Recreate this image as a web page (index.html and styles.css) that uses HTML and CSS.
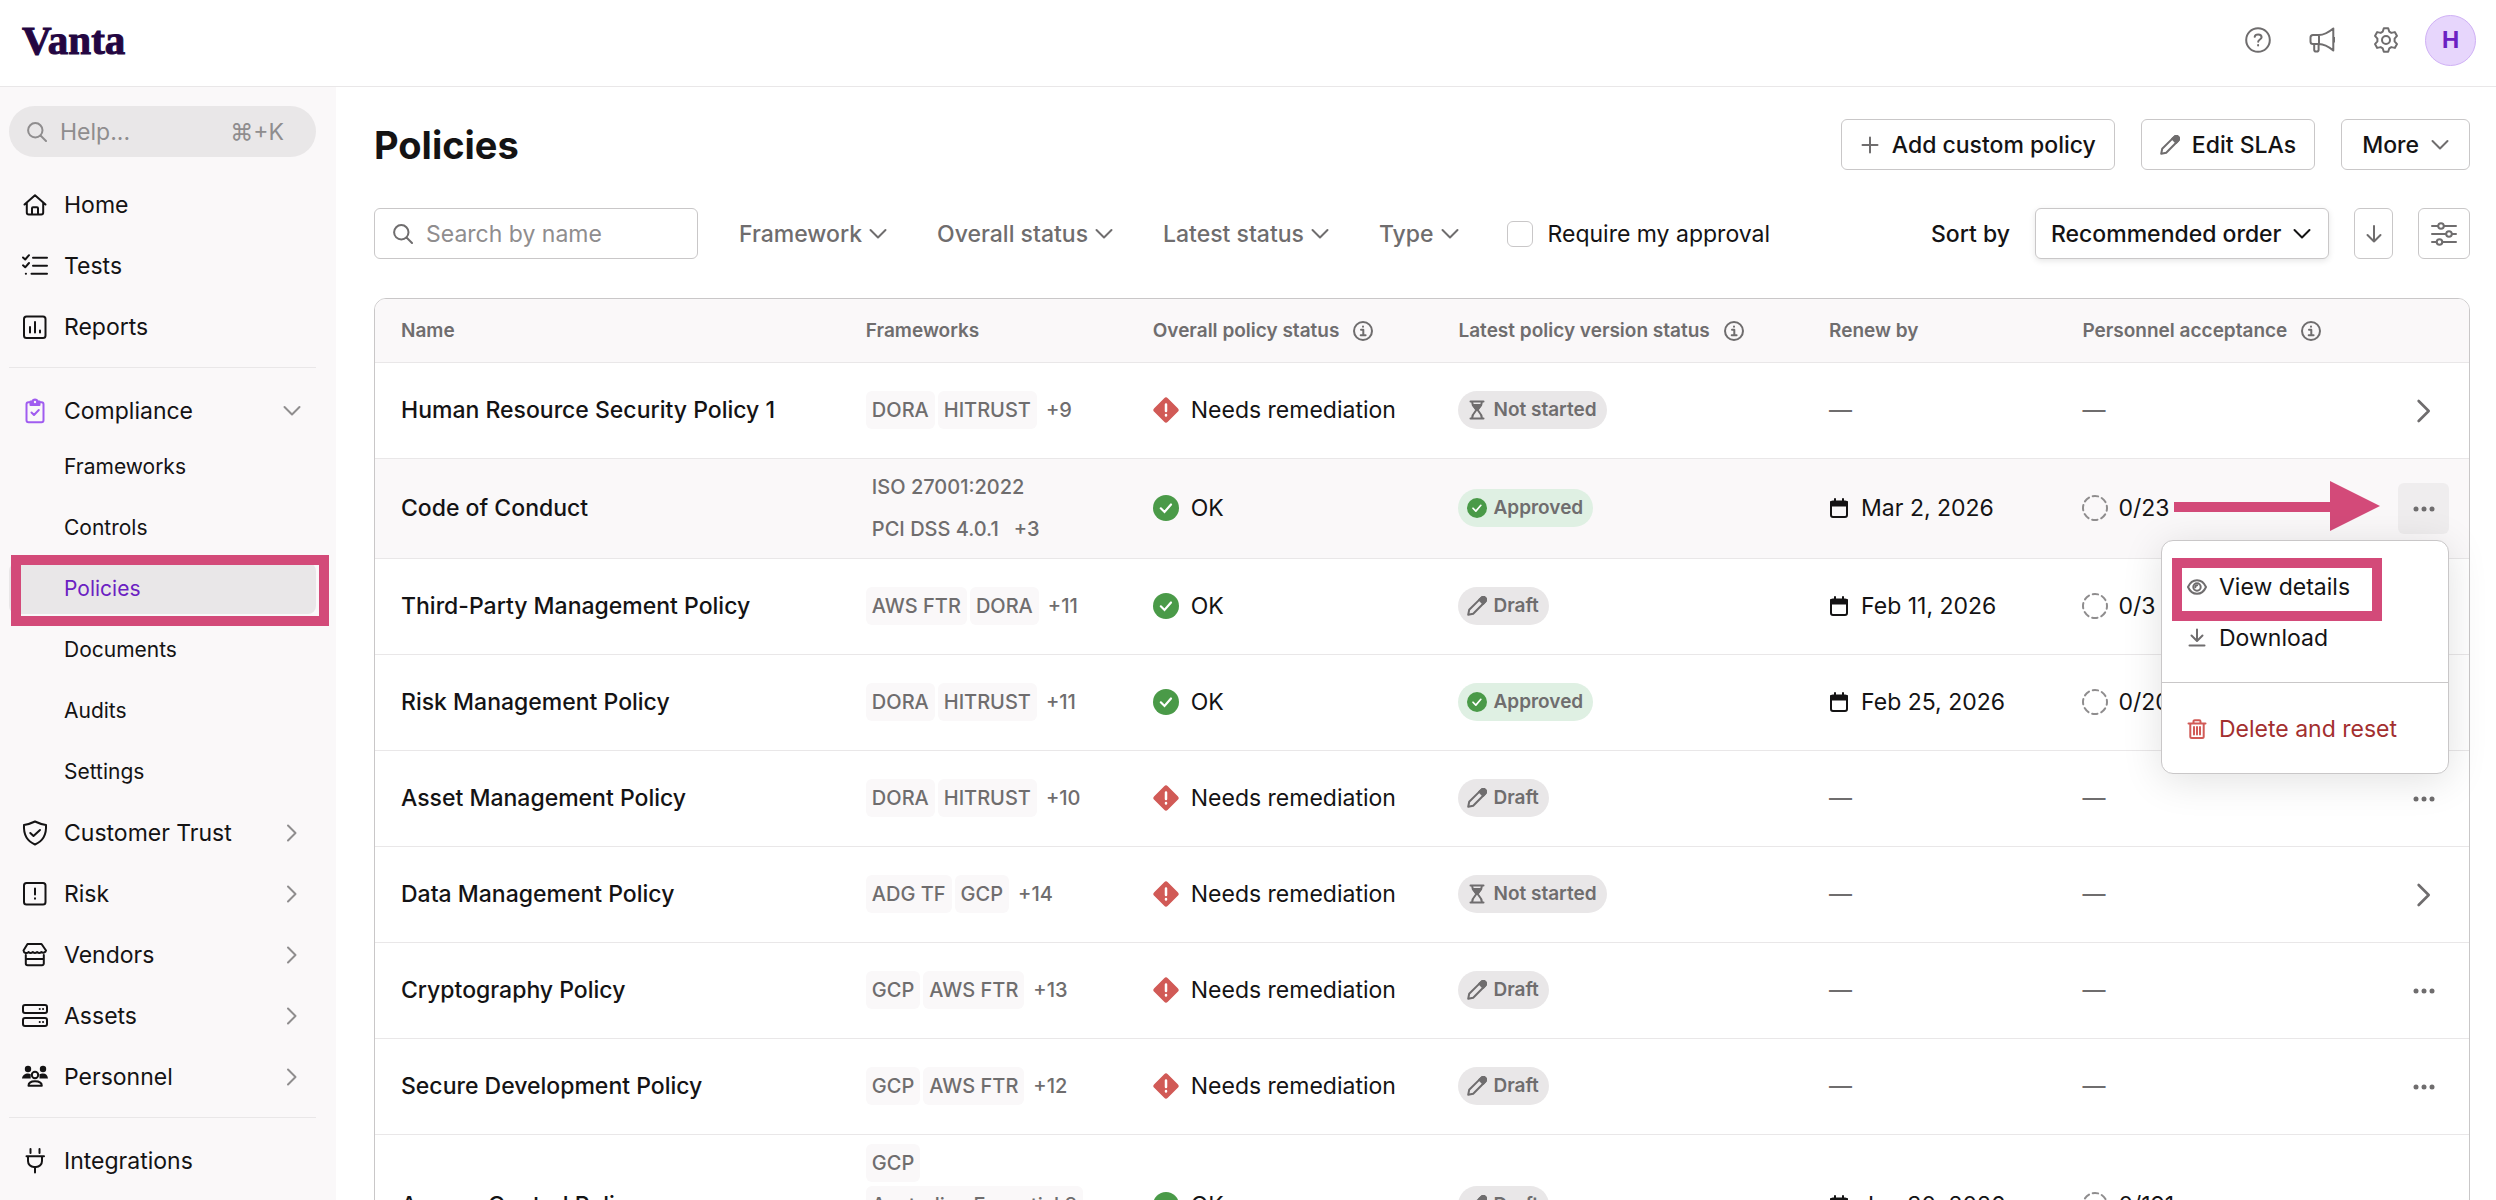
FILE: index.html
```html
<!DOCTYPE html>
<html lang="en">
<head>
    <meta charset="UTF-8">
    <meta name="viewport" content="width=device-width, initial-scale=1.0">
    <title>Policies | Vanta</title>
    <link rel="stylesheet" href="styles.css">
</head>
<body>
    <!-- Icon set -->
    <svg class="icon-defs" aria-hidden="true">
        <symbol id="i-search" viewBox="0 0 20 20"><circle cx="8.3" cy="8.3" r="7.2"/><path d="M13.5 13.5L19 19"/></symbol>
        <symbol id="i-down" viewBox="0 0 18 18"><path d="M1.5 5L9 12.5L16.5 5"/></symbol>
        <symbol id="i-right" viewBox="0 0 18 18"><path d="M5 1.5L12.5 9L5 16.5"/></symbol>
        <symbol id="i-home" viewBox="0 0 26 26"><path d="M2.5 12.5L13 3.2L23.5 12.5M4.8 11V20.5a2 2 0 0 0 2 2H19.2a2 2 0 0 0 2-2V11M10 22.3V16.2a1 1 0 0 1 1-1h4a1 1 0 0 1 1 1V22.3"/></symbol>
        <symbol id="i-tests" viewBox="0 0 26 26"><path d="M1 4.5L3.2 6.5L7 2.2M1 12.3L3.2 14.3L7 10M11 4.8H25M11 12.8H25M9.5 20.8H25M3.8 20.8H4"/></symbol>
        <symbol id="i-reports" viewBox="0 0 26 26"><rect x="2" y="2.5" width="21.5" height="21.5" rx="2.5"/><path d="M8 13V18.5M13 8V18.5M18 16.5V18.5"/></symbol>
        <symbol id="i-compliance" viewBox="0 0 26 26"><rect x="4.5" y="4.2" width="17" height="20" rx="2"/><path d="M9.5 14.5L12 17L16.8 12"/><path d="M8.5 3.5H10.3a2.8 2.8 0 0 1 5.4 0H17.5V7H8.5Z" fill="currentColor"/><circle cx="13" cy="4" r="1.2" fill="#faf8f9" stroke="none"/></symbol>
        <symbol id="i-shield" viewBox="0 0 26 26"><path d="M13 1.5C16 3 20 4.3 24 4.9C24.5 13 22.5 20.5 13 24.5C3.5 20.5 1.5 13 2 4.9C6 4.3 10 3 13 1.5ZM8.3 13L11.5 16L18 10"/></symbol>
        <symbol id="i-risk" viewBox="0 0 26 26"><rect x="2" y="2" width="21.5" height="21.5" rx="2.5"/><path d="M13 7.5V13.5M13 17.3V17.7"/></symbol>
        <symbol id="i-vendors" viewBox="0 0 26 26"><path d="M5.5 2H19.5L24 8.5a2.8 2.8 0 0 1-4.6 1.5a3.3 3.3 0 0 1-4.3 0a3.3 3.3 0 0 1-4.3 0a3.3 3.3 0 0 1-4.3 0A2.8 2.8 0 0 1 1.5 8.5ZM3.8 13V21.5a1.8 1.8 0 0 0 1.8 1.8H20a1.8 1.8 0 0 0 1.8-1.8V13M4 17H21.5"/></symbol>
        <symbol id="i-assets" viewBox="0 0 26 26"><rect x="1" y="2" width="24" height="8" rx="2"/><rect x="1" y="15" width="24" height="8" rx="2"/><path d="M17.7 6h.1M21 6h.1M17.7 19h.1M21 19h.1"/></symbol>
        <symbol id="i-people" viewBox="0 0 26 26"><g fill="currentColor" stroke="none"><circle cx="6" cy="5" r="3.2"/><circle cx="21" cy="5" r="3.2"/><path d="M0 14.5C.5 11 3 9.5 6 9.5C7 9.5 8 9.7 8.7 10.2V14.5ZM26 14.5C25.5 11 24 9.5 21 9.5C19.5 9.5 18.5 9.7 17.5 10.2V14.5Z"/></g><circle cx="13" cy="11" r="3.2"/><path d="M6.5 21.7C6.5 18.5 9 17.2 13 17.2S19.8 18.5 19.8 21.7Z"/></symbol>
        <symbol id="i-plug" viewBox="0 0 26 26"><path d="M8.5 1V5M17.5 1V5M4.5 8.2H22M6 8.5V13a6 6 0 0 0 6 6h2a6 6 0 0 0 6-6V8.5M13 19.5V24.5"/></symbol>
        <symbol id="i-help" viewBox="0 0 26 26"><circle cx="13" cy="13" r="11.8"/><path d="M9.7 9.8C10 8 11.5 7.5 13.2 7.5C15 7.5 16.6 8.5 16.6 10.3C16.6 12.5 13.2 12.5 13.2 14.8M13.1 18.1V18.4"/></symbol>
        <symbol id="i-megaphone" viewBox="0 0 26 26"><path d="M10 8C15.5 8 20 5 24.3 1.5V23.5C20 20 15.5 17 10 17ZM10 8H4a2.5 2.5 0 0 0-2.5 2.5v4A2.5 2.5 0 0 0 4 17H10M5.2 17V22.8a1.8 1.8 0 0 0 1.8 1.8h.8a1.8 1.8 0 0 0 1.8-1.8V17M25.5 11V14.5"/></symbol>
        <symbol id="i-gear" viewBox="0 0 26 26"><circle cx="13" cy="13" r="4"/><path d="M10.8 1.3H15.2L16.3 4.7L18.3 5.9L21.8 5.1L24 8.9L21.6 11.6V14.4L24 17.1L21.8 20.9L18.3 20.1L16.3 21.3L15.2 24.7H10.8L9.7 21.3L7.7 20.1L4.2 20.9L2 17.1L4.4 14.4V11.6L2 8.9L4.2 5.1L7.7 5.9L9.7 4.7Z"/></symbol>
        <symbol id="i-plus" viewBox="0 0 20 20"><path d="M10 2.5V17.5M2.5 10H17.5"/></symbol>
        <symbol id="i-pencil" viewBox="0 0 20 20"><path d="M1.2 18.8L2.2 13.8L14.2 1.9a2.2 2.2 0 0 1 3.9 3.8L6.2 17.8Z"/><path d="M12.3 3.8L14.5 1.7A2.3 2.3 0 0 1 18.3 5.5L16.2 7.7Z" fill="currentColor"/></symbol>
        <symbol id="i-arrow-down" viewBox="0 0 18 18"><path d="M9 1V16.5M2.5 10L9 16.5L15.5 10"/></symbol>
        <symbol id="i-sliders" viewBox="0 0 26 26"><path d="M1 5H7M13 5H25M1 13H15M21 13H25M1 21H5.5M11.5 21H25"/><circle cx="10" cy="5" r="2.8"/><circle cx="18" cy="13" r="2.8"/><circle cx="8.5" cy="21" r="2.8"/></symbol>
        <symbol id="i-info" viewBox="0 0 20 20"><circle cx="10" cy="10" r="9"/><path d="M8 8.8H10.3V14M7.7 14.2H12.6M10 5.5V5.7"/></symbol>
        <symbol id="i-alert" viewBox="0 0 26 26"><path d="M11.2 1.2a2.5 2.5 0 0 1 3.6 0l10 10a2.5 2.5 0 0 1 0 3.6l-10 10a2.5 2.5 0 0 1-3.6 0l-10-10a2.5 2.5 0 0 1 0-3.6Z" fill="#d15a56"/><path d="M13 7.5V14M13 18V18.4" stroke="#fff" stroke-width="2.5" stroke-linecap="round"/></symbol>
        <symbol id="i-ok" viewBox="0 0 26 26"><circle cx="13" cy="13" r="13" fill="#4a9a48"/><path d="M7.8 13.3L11.5 17L18 9.5" stroke="#fff" stroke-width="2.2" stroke-linecap="round" fill="none"/></symbol>
        <symbol id="i-hourglass" viewBox="0 0 20 20"><path d="M3.5 1.5H16.5M3.5 18.5H16.5M5 1.5C5 6 8 8 9.5 10C8 12 5 14 5 18.5M15 1.5C15 6 12 8 10.5 10C12 12 15 14 15 18.5"/><path d="M5.8 5H14.2L10 10Z" fill="currentColor"/></symbol>
        <symbol id="i-calendar" viewBox="0 0 20 20"><rect x="2" y="3.5" width="16" height="15.5" rx="2"/><path d="M2 4H18V7.5H2Z" fill="currentColor"/><path d="M6 1V4M14 1V4"/></symbol>
        <symbol id="i-dashed" viewBox="0 0 26 26"><circle cx="13" cy="13" r="12" stroke-dasharray="5.5 3.924" stroke-dashoffset="2.7"/></symbol>
        <symbol id="i-dots" viewBox="0 0 26 26"><g fill="currentColor" stroke="none"><circle cx="5" cy="13" r="2.5"/><circle cx="13" cy="13" r="2.5"/><circle cx="21" cy="13" r="2.5"/></g></symbol>
        <symbol id="i-eye" viewBox="0 0 20 20"><path d="M1 10C3 5.5 6 3.2 10 3.2S17 5.5 19 10C17 14.5 14 16.8 10 16.8S3 14.5 1 10Z"/><circle cx="10" cy="10" r="3.7"/><path d="M8.3 10.3C8.3 9 9 8.3 10.2 8.3"/></symbol>
        <symbol id="i-download" viewBox="0 0 20 20"><path d="M10 1.5V12.5M4.5 7.5L10 13L15.5 7.5M2.5 17.5H17.5"/></symbol>
        <symbol id="i-trash" viewBox="0 0 20 20"><path d="M1.5 4.5H18.5M6.5 4.5V2.5a1.3 1.3 0 0 1 1.3-1.3h4.4a1.3 1.3 0 0 1 1.3 1.3V4.5M3.3 4.5V17.5a1.5 1.5 0 0 0 1.5 1.5H15.2a1.5 1.5 0 0 0 1.5-1.5V4.5M7 8V15.5M10 8V15.5M13 8V15.5"/></symbol>
    </svg>

    <!-- Top bar -->
    <header class="topbar">
        <a class="logo" href="#">Vanta</a>
        <div class="topbar-actions">
            <button class="icon-btn" aria-label="Help"><svg class="icon icon-lg"><use href="#i-help"/></svg></button>
            <button class="icon-btn" aria-label="Announcements"><svg class="icon icon-lg"><use href="#i-megaphone"/></svg></button>
            <button class="icon-btn" aria-label="Settings"><svg class="icon icon-lg"><use href="#i-gear"/></svg></button>
            <button class="avatar">H</button>
        </div>
    </header>

    <div class="layout">
        <!-- Sidebar -->
        <nav class="sidebar">
            <label class="help-search">
                <svg class="icon"><use href="#i-search"/></svg>
                <input type="text" placeholder="Help..." aria-label="Help">
                <kbd>⌘+K</kbd>
            </label>

            <a class="nav-item" href="#"><svg class="icon icon-lg"><use href="#i-home"/></svg><span>Home</span></a>
            <a class="nav-item" href="#"><svg class="icon icon-lg"><use href="#i-tests"/></svg><span>Tests</span></a>
            <a class="nav-item" href="#"><svg class="icon icon-lg"><use href="#i-reports"/></svg><span>Reports</span></a>
            <hr>
            <a class="nav-item open" href="#"><svg class="icon icon-lg"><use href="#i-compliance"/></svg><span>Compliance</span><svg class="icon chevron"><use href="#i-down"/></svg></a>
            <div class="subnav">
                <a class="sub-item" href="#">Frameworks</a>
                <a class="sub-item" href="#">Controls</a>
                <a class="sub-item active" href="#">Policies<i class="mark mark-nav"></i></a>
                <a class="sub-item" href="#">Documents</a>
                <a class="sub-item" href="#">Audits</a>
                <a class="sub-item" href="#">Settings</a>
            </div>
            <a class="nav-item" href="#"><svg class="icon icon-lg"><use href="#i-shield"/></svg><span>Customer Trust</span><svg class="icon chevron"><use href="#i-right"/></svg></a>
            <a class="nav-item" href="#"><svg class="icon icon-lg"><use href="#i-risk"/></svg><span>Risk</span><svg class="icon chevron"><use href="#i-right"/></svg></a>
            <a class="nav-item" href="#"><svg class="icon icon-lg"><use href="#i-vendors"/></svg><span>Vendors</span><svg class="icon chevron"><use href="#i-right"/></svg></a>
            <a class="nav-item" href="#"><svg class="icon icon-lg"><use href="#i-assets"/></svg><span>Assets</span><svg class="icon chevron"><use href="#i-right"/></svg></a>
            <a class="nav-item" href="#"><svg class="icon icon-lg"><use href="#i-people"/></svg><span>Personnel</span><svg class="icon chevron"><use href="#i-right"/></svg></a>
            <hr>
            <a class="nav-item" href="#"><svg class="icon icon-lg"><use href="#i-plug"/></svg><span>Integrations</span></a>
        </nav>

        <main class="main">
            <div class="page-head">
                <h1>Policies</h1>
                <div class="page-actions">
                    <button class="btn"><svg class="icon"><use href="#i-plus"/></svg>Add custom policy</button>
                    <button class="btn"><svg class="icon"><use href="#i-pencil"/></svg>Edit SLAs</button>
                    <button class="btn btn-more">More<svg class="icon chevron"><use href="#i-down"/></svg></button>
                </div>
            </div>

            <!-- Filters -->
            <div class="filters">
                <label class="search-box">
                    <svg class="icon"><use href="#i-search"/></svg>
                    <input type="text" placeholder="Search by name" aria-label="Search by name">
                </label>
                <button class="filter">Framework<svg class="icon chevron"><use href="#i-down"/></svg></button>
                <button class="filter">Overall status<svg class="icon chevron"><use href="#i-down"/></svg></button>
                <button class="filter">Latest status<svg class="icon chevron"><use href="#i-down"/></svg></button>
                <button class="filter">Type<svg class="icon chevron"><use href="#i-down"/></svg></button>
                <label class="check"><input type="checkbox">Require my approval</label>
                <div class="sorting">
                    <label for="sort">Sort by</label>
                    <div class="select">
                        <select id="sort"><option>Recommended order</option></select>
                        <svg class="icon chevron"><use href="#i-down"/></svg>
                    </div>
                    <button class="btn btn-sort" aria-label="Sort direction"><svg class="icon chevron"><use href="#i-arrow-down"/></svg></button>
                    <button class="btn btn-columns" aria-label="Columns"><svg class="icon icon-lg"><use href="#i-sliders"/></svg></button>
                </div>
            </div>

            <!-- Policies table -->
            <div class="table-wrap">
                <table>
                    <colgroup>
                        <col class="c-name"><col class="c-frameworks"><col class="c-overall"><col class="c-latest"><col class="c-renew"><col class="c-accept"><col class="c-actions">
                    </colgroup>
                    <thead>
                        <tr>
                            <th>Name</th>
                            <th>Frameworks</th>
                            <th><div class="cell">Overall policy status<svg class="icon"><use href="#i-info"/></svg></div></th>
                            <th><div class="cell">Latest policy version status<svg class="icon"><use href="#i-info"/></svg></div></th>
                            <th>Renew by</th>
                            <th><div class="cell">Personnel acceptance<svg class="icon"><use href="#i-info"/></svg></div></th>
                            <th></th>
                        </tr>
                    </thead>
                    <tbody>
                        <tr>
                            <td class="name">Human Resource Security Policy 1</td>
                            <td><div class="tags"><span class="tag">DORA</span><span class="tag">HITRUST</span><span class="more">+9</span></div></td>
                            <td><div class="cell"><svg class="icon-lg"><use href="#i-alert"/></svg>Needs remediation</div></td>
                            <td><span class="badge"><svg class="icon"><use href="#i-hourglass"/></svg>Not started</span></td>
                            <td class="empty">—</td>
                            <td class="empty">—</td>
                            <td><button class="row-btn" aria-label="Open"><svg class="icon icon-open"><use href="#i-right"/></svg></button></td>
                        </tr>
                        <tr class="selected">
                            <td class="name">Code of Conduct</td>
                            <td><div class="tags"><span class="tag">ISO 27001:2022</span><i class="break"></i><span class="tag">PCI DSS 4.0.1</span><span class="more">+3</span></div></td>
                            <td><div class="cell"><svg class="icon-lg"><use href="#i-ok"/></svg>OK</div></td>
                            <td><span class="badge approved"><svg class="icon"><use href="#i-ok"/></svg>Approved</span></td>
                            <td><div class="cell"><svg class="icon icon-date"><use href="#i-calendar"/></svg>Mar 2, 2026</div></td>
                            <td>
                                <div class="cell progress"><svg class="icon icon-lg"><use href="#i-dashed"/></svg>0/23
                                    <svg class="arrow" viewBox="0 0 206 50"><path d="M0 21H156V0L206 25L156 50V31H0Z"/></svg>
                                </div>
                            </td>
                            <td>
                                <div class="row-menu">
                                    <button class="row-btn pressed" aria-label="More actions"><svg class="icon icon-lg"><use href="#i-dots"/></svg></button>
                                    <div class="menu">
                                        <div class="menu-group">
                                            <button class="menu-item"><svg class="icon"><use href="#i-eye"/></svg>View details<i class="mark mark-menu"></i></button>
                                            <button class="menu-item"><svg class="icon"><use href="#i-download"/></svg>Download</button>
                                        </div>
                                        <div class="menu-group">
                                            <button class="menu-item danger"><svg class="icon"><use href="#i-trash"/></svg>Delete and reset</button>
                                        </div>
                                    </div>
                                </div>
                            </td>
                        </tr>
                        <tr>
                            <td class="name">Third-Party Management Policy</td>
                            <td><div class="tags"><span class="tag">AWS FTR</span><span class="tag">DORA</span><span class="more">+11</span></div></td>
                            <td><div class="cell"><svg class="icon-lg"><use href="#i-ok"/></svg>OK</div></td>
                            <td><span class="badge"><svg class="icon"><use href="#i-pencil"/></svg>Draft</span></td>
                            <td><div class="cell"><svg class="icon icon-date"><use href="#i-calendar"/></svg>Feb 11, 2026</div></td>
                            <td><div class="cell progress"><svg class="icon icon-lg"><use href="#i-dashed"/></svg>0/3</div></td>
                            <td><button class="row-btn" aria-label="More actions"><svg class="icon icon-lg"><use href="#i-dots"/></svg></button></td>
                        </tr>
                        <tr>
                            <td class="name">Risk Management Policy</td>
                            <td><div class="tags"><span class="tag">DORA</span><span class="tag">HITRUST</span><span class="more">+11</span></div></td>
                            <td><div class="cell"><svg class="icon-lg"><use href="#i-ok"/></svg>OK</div></td>
                            <td><span class="badge approved"><svg class="icon"><use href="#i-ok"/></svg>Approved</span></td>
                            <td><div class="cell"><svg class="icon icon-date"><use href="#i-calendar"/></svg>Feb 25, 2026</div></td>
                            <td><div class="cell progress"><svg class="icon icon-lg"><use href="#i-dashed"/></svg>0/20</div></td>
                            <td><button class="row-btn" aria-label="More actions"><svg class="icon icon-lg"><use href="#i-dots"/></svg></button></td>
                        </tr>
                        <tr>
                            <td class="name">Asset Management Policy</td>
                            <td><div class="tags"><span class="tag">DORA</span><span class="tag">HITRUST</span><span class="more">+10</span></div></td>
                            <td><div class="cell"><svg class="icon-lg"><use href="#i-alert"/></svg>Needs remediation</div></td>
                            <td><span class="badge"><svg class="icon"><use href="#i-pencil"/></svg>Draft</span></td>
                            <td class="empty">—</td>
                            <td class="empty">—</td>
                            <td><button class="row-btn" aria-label="More actions"><svg class="icon icon-lg"><use href="#i-dots"/></svg></button></td>
                        </tr>
                        <tr>
                            <td class="name">Data Management Policy</td>
                            <td><div class="tags"><span class="tag">ADG TF</span><span class="tag">GCP</span><span class="more">+14</span></div></td>
                            <td><div class="cell"><svg class="icon-lg"><use href="#i-alert"/></svg>Needs remediation</div></td>
                            <td><span class="badge"><svg class="icon"><use href="#i-hourglass"/></svg>Not started</span></td>
                            <td class="empty">—</td>
                            <td class="empty">—</td>
                            <td><button class="row-btn" aria-label="Open"><svg class="icon icon-open"><use href="#i-right"/></svg></button></td>
                        </tr>
                        <tr>
                            <td class="name">Cryptography Policy</td>
                            <td><div class="tags"><span class="tag">GCP</span><span class="tag">AWS FTR</span><span class="more">+13</span></div></td>
                            <td><div class="cell"><svg class="icon-lg"><use href="#i-alert"/></svg>Needs remediation</div></td>
                            <td><span class="badge"><svg class="icon"><use href="#i-pencil"/></svg>Draft</span></td>
                            <td class="empty">—</td>
                            <td class="empty">—</td>
                            <td><button class="row-btn" aria-label="More actions"><svg class="icon icon-lg"><use href="#i-dots"/></svg></button></td>
                        </tr>
                        <tr>
                            <td class="name">Secure Development Policy</td>
                            <td><div class="tags"><span class="tag">GCP</span><span class="tag">AWS FTR</span><span class="more">+12</span></div></td>
                            <td><div class="cell"><svg class="icon-lg"><use href="#i-alert"/></svg>Needs remediation</div></td>
                            <td><span class="badge"><svg class="icon"><use href="#i-pencil"/></svg>Draft</span></td>
                            <td class="empty">—</td>
                            <td class="empty">—</td>
                            <td><button class="row-btn" aria-label="More actions"><svg class="icon icon-lg"><use href="#i-dots"/></svg></button></td>
                        </tr>
                        <tr>
                            <td class="name">Access Control Policy</td>
                            <td><div class="tags"><span class="tag">GCP</span><i class="break"></i><span class="tag">Australian Essential 8</span><i class="break"></i><span class="more">+12</span></div></td>
                            <td><div class="cell"><svg class="icon-lg"><use href="#i-ok"/></svg>OK</div></td>
                            <td><span class="badge"><svg class="icon"><use href="#i-pencil"/></svg>Draft</span></td>
                            <td><div class="cell"><svg class="icon icon-date"><use href="#i-calendar"/></svg>Jan 30, 2026</div></td>
                            <td><div class="cell progress"><svg class="icon icon-lg"><use href="#i-dashed"/></svg>0/191</div></td>
                            <td></td>
                        </tr>
                    </tbody>
                </table>
            </div>
        </main>
    </div>
</body>
</html>
```

FILE: styles.css
```css
* {
    box-sizing: border-box;
}
body {
    margin: 0;
    height: 100vh;
    overflow: hidden;
    display: flex;
    flex-direction: column;
    font-family: Inter, "Liberation Sans", sans-serif;
    font-size: 23px;
    line-height: 30px;
    color: #141314;
    background: #fff;
}
a {
    color: inherit;
    text-decoration: none;
}
button, input, select {
    font: inherit;
    color: inherit;
    margin: 0;
}
button {
    border: 0;
    padding: 0;
    background: none;
    cursor: pointer;
}
input[type="text"] {
    flex: 1;
    min-width: 0;
    border: 0;
    padding: 0;
    background: none;
    outline: none;
}
input::placeholder {
    color: #8f8d8e;
    opacity: 1;
}

/* Icons */
.icon-defs {
    position: absolute;
    width: 0;
    height: 0;
}
.icon {
    width: 20px;
    height: 20px;
    flex: none;
    fill: none;
    stroke: currentColor;
    stroke-width: 2px;
    stroke-linecap: round;
    stroke-linejoin: round;
    color: #6f6d6e;
}
.icon-lg {
    width: 26px;
    height: 26px;
    flex: none;
}
.chevron {
    width: 18px;
    height: 18px;
}

/* Top bar */
.topbar {
    height: 87px;
    flex: none;
    display: flex;
    align-items: center;
    justify-content: space-between;
    padding: 0 20px 6px 22px;
    border-bottom: 1px solid #e9e7e8;
}
.logo {
    font-family: "Liberation Serif", serif;
    font-size: 41px;
    font-weight: bold;
    color: #240642;
    -webkit-text-stroke: 1px #240642;
}
.topbar-actions {
    display: flex;
    align-items: center;
    gap: 38px;
}
.icon-btn {
    display: flex;
}
.avatar {
    width: 51px;
    height: 51px;
    margin-left: -12px;
    border: 1px solid #cfb0f5;
    border-radius: 50%;
    background: #e7d6fc;
    color: #6b21c2;
    font-weight: 700;
}

/* Sidebar */
.layout {
    flex: 1;
    min-height: 0;
    display: flex;
}
.sidebar {
    width: 336px;
    flex: none;
    padding: 19px 20px 0 9px;
    background: #faf8f9;
}
.help-search {
    display: flex;
    align-items: center;
    gap: 13px;
    height: 51px;
    margin-bottom: 22px;
    padding: 0 32px 0 18px;
    border-radius: 26px;
    background: #e9e7e8;
    color: #8f8d8e;
}
.help-search .icon {
    color: #8f8d8e;
}
.help-search kbd {
    font-family: inherit;
    font-size: 23px;
}
.nav-item {
    display: flex;
    align-items: center;
    gap: 16px;
    height: 51px;
    margin-bottom: 10px;
    padding: 0 15px 0 13px;
}
.nav-item span {
    flex: 1;
}
.nav-item .icon {
    color: #141314;
}
.nav-item .chevron {
    color: #8f8d8e;
}
.nav-item.open {
    margin-bottom: 5px;
}
.nav-item.open .icon-lg {
    color: #a05cf0;
}
.sidebar hr {
    height: 1px;
    margin: 15px 0 17px;
    border: 0;
    background: #e9e7e8;
}
.sub-item {
    position: relative;
    display: flex;
    align-items: center;
    height: 51px;
    margin-bottom: 10px;
    padding-left: 55px;
    border-radius: 8px;
    font-size: 21px;
}
.sub-item.active {
    background: #e9e7e8;
    color: #6b21c2;
}

/* Highlight frames */
.mark {
    position: absolute;
    border: 10px solid #d34a79;
}
.mark-nav {
    inset: -8px -13px -12px 2px;
}
.mark-menu {
    inset: -3px 66px -9px 10px;
}

/* Page head */
.main {
    flex: 1;
    min-width: 0;
    padding: 32px 26px 0 38px;
}
.page-head {
    display: flex;
    align-items: center;
    justify-content: space-between;
    margin-bottom: 38px;
}
h1 {
    margin: 0;
    font-size: 38px;
    line-height: 46px;
    font-weight: 700;
}
.page-actions {
    display: flex;
    gap: 26px;
}
.btn {
    display: flex;
    align-items: center;
    justify-content: center;
    gap: 12px;
    height: 51px;
    padding: 0 18px;
    border: 1px solid #c9c7c8;
    border-radius: 6px;
    background: #fff;
    font-weight: 500;
}
.btn-more {
    padding: 0 20px;
}
.btn-sort {
    width: 39px;
    padding: 0;
}
.btn-columns {
    width: 52px;
    padding: 0;
}

/* Filters */
.filters {
    display: flex;
    align-items: center;
    margin-bottom: 39px;
}
.search-box {
    display: flex;
    align-items: center;
    gap: 13px;
    width: 324px;
    height: 51px;
    padding: 0 18px;
    border: 1px solid #c9c7c8;
    border-radius: 6px;
}
.filter {
    display: flex;
    align-items: center;
    gap: 7px;
    margin-left: 50px;
    font-weight: 500;
    color: #6f6d6e;
}
.search-box + .filter {
    margin-left: 41px;
}
.check {
    display: flex;
    align-items: center;
    gap: 15px;
    margin-left: 48px;
}
.check input {
    appearance: none;
    width: 26px;
    height: 26px;
    border: 1px solid #c9c7c8;
    border-radius: 6px;
    background: #fff;
}
.sorting {
    display: flex;
    align-items: center;
    gap: 25px;
    margin-left: auto;
    font-weight: 500;
}
.select {
    position: relative;
}
.select select {
    appearance: none;
    height: 51px;
    padding: 0 46px 0 15px;
    border: 1px solid #c9c7c8;
    border-radius: 6px;
    background: #fff;
    box-shadow: 0 2px 6px rgba(0, 0, 0, 0.1);
}
.select .chevron {
    position: absolute;
    top: 17px;
    right: 18px;
    color: #141314;
    pointer-events: none;
}

/* Table */
.table-wrap {
    border: 1px solid #c9c7c8;
    border-radius: 12px;
}
table {
    width: 100%;
    table-layout: fixed;
    border-collapse: separate;
    border-spacing: 0;
}
.c-name { width: 22.2%; }
.c-frameworks { width: 13.7%; }
.c-overall { width: 14.6%; }
.c-latest { width: 17.7%; }
.c-renew { width: 12.1%; }
.c-accept { width: 15%; }
th {
    height: 64px;
    padding: 0 0 0 26px;
    border-bottom: 1px solid #e9e7e8;
    background: #faf8f9;
    color: #6f6d6e;
    font-size: 19px;
    font-weight: 600;
    text-align: left;
    white-space: nowrap;
}
th:first-child {
    border-top-left-radius: 11px;
}
th:last-child {
    border-top-right-radius: 11px;
}
th .cell {
    gap: 14px;
}
td {
    height: 96px;
    padding: 9px 0 10px 26px;
    border-bottom: 1px solid #e9e7e8;
    white-space: nowrap;
}
td:last-child {
    padding: 0 20px 0 0;
}
.selected td {
    background: #faf8f9;
}
.name {
    font-weight: 500;
}
.empty {
    color: #6f6d6e;
}
.cell {
    display: flex;
    align-items: center;
    gap: 12px;
}
.progress {
    position: relative;
    gap: 10px;
}
.progress .icon {
    color: #8f8d8e;
}
.icon-date {
    color: #141314;
}
.tags {
    display: flex;
    flex-wrap: wrap;
    gap: 2px 3px;
    font-size: 20px;
    font-weight: 500;
    color: #6f6d6e;
}
.tag, .more {
    padding: 4px 6px;
    border-radius: 6px;
    background: #faf8f9;
}
.more {
    background: none;
}
.break {
    flex-basis: 100%;
}
.badge {
    display: inline-flex;
    align-items: center;
    gap: 6px;
    padding: 4px 10px 4px 9px;
    border-radius: 19px;
    background: #e9e7e8;
    color: #6f6d6e;
    font-size: 19px;
    font-weight: 600;
    vertical-align: middle;
}
.badge.approved {
    background: #dff0e3;
}
.badge.approved .icon {
    stroke: none;
}

/* Row actions */
.row-btn {
    display: flex;
    align-items: center;
    justify-content: center;
    width: 51px;
    height: 51px;
    margin-left: auto;
    border-radius: 6px;
}
.row-btn.pressed {
    background: #efedee;
}
.icon-open {
    width: 24px;
    height: 24px;
}
.row-menu {
    position: relative;
}
.menu {
    position: absolute;
    z-index: 2;
    top: 57px;
    right: 0;
    width: 288px;
    border: 1px solid #c9c7c8;
    border-radius: 12px;
    background: #fff;
    box-shadow: 0 6px 40px rgba(0, 0, 0, 0.12);
}
.menu-group {
    padding: 20px 0 19px;
}
.menu-group + .menu-group {
    border-top: 1px solid #c9c7c8;
}
.menu-item {
    position: relative;
    display: flex;
    align-items: center;
    gap: 12px;
    width: 100%;
    height: 51px;
    padding: 0 25px;
}
.danger {
    color: #a32f2f;
}
.danger .icon {
    color: #d15a56;
}
.arrow {
    position: absolute;
    left: 92px;
    top: -12px;
    width: 206px;
    height: 50px;
    fill: #d34a79;
}
```
